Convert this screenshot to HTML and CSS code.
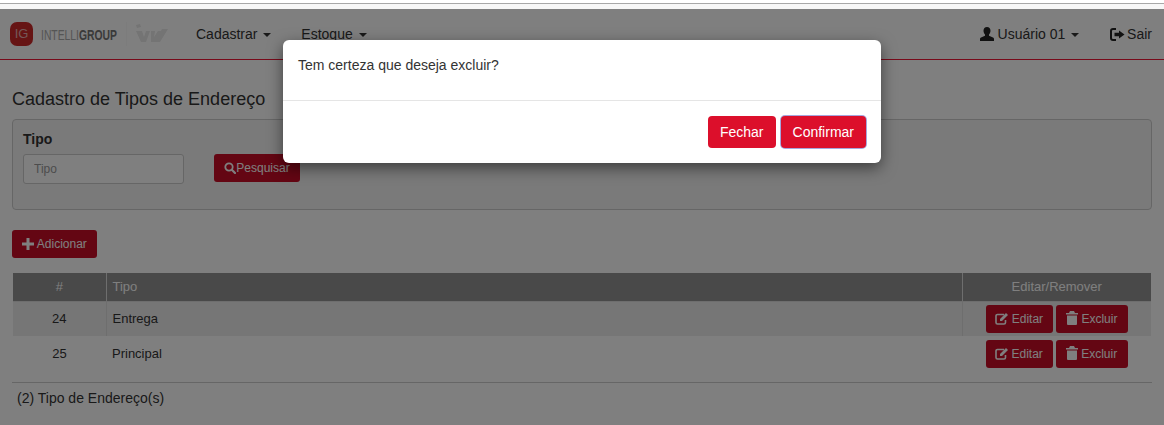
FILE: index.html
```html
<!DOCTYPE html>
<html>
<head>
    <meta charset="utf-8">
    <title>Cadastro de Tipos de Endereço</title>
    <link rel="stylesheet" href="styles.css">
</head>
<body>
    <div class="browser-strip"></div>
    <div class="page">
        <nav class="navbar">
            <div class="brand">
                <span class="brand-badge">IG</span>
                <span class="brand-name">INTELLI<b>GROUP</b></span>
                <svg class="brand-mark" width="43" height="24" viewBox="0 0 43 24">
                    <path d="M.5 0v24" stroke="#f8f8f8"/>
                    <path d="M10 3l4-1 1 3-4 1zM10 9h6l2 6 2-6h4l-4 11h-5zM25 9h4l-1 6 4-6h4l-7 11h-4zM36 7h6l-8 13h-5z" fill="#e8e8e8"/>
                </svg>
            </div>
            <a class="nav-link">Cadastrar <i class="caret"></i></a>
            <a class="nav-link">Estoque <i class="caret"></i></a>
            <div class="nav-right">
                <a class="nav-link user-link">
                    <svg class="icon" width="14" height="14" viewBox="0 0 14 14"><path d="M7 0c2.200 0 3.500 1.600 3.500 3.800 0 1.500-.6 2.900-1.500 3.700v1.200l4 1.800c.6.300 1 .8 1 1.500v2H0v-2c0-.7.400-1.200 1-1.500l4-1.800V7.500C4.100 6.700 3.500 5.300 3.500 3.800 3.500 1.600 4.800 0 7 0z" fill="#222"/></svg>
                    Usuário 01 <i class="caret"></i>
                </a>
                <a class="nav-link exit-link">
                    <svg class="icon icon-exit" width="15" height="13" viewBox="0 0 15 13"><path d="M6 1H3a2 2 0 0 0-2 2v7a2 2 0 0 0 2 2h3" fill="none" stroke="#222" stroke-width="2"/><path d="M9 2.500 14.500 6.500 9 10.500V8.200H4.500V4.800H9z" fill="#222"/></svg>
                    Sair
                </a>
            </div>
        </nav>

        <main class="content">
            <h1 class="title">Cadastro de Tipos de Endereço</h1>

            <section class="filter-panel">
                <div class="field">
                    <label class="field-label">Tipo</label>
                    <input class="field-input" placeholder="Tipo">
                </div>
                <button class="btn btn-search">
                    <svg class="icon" width="12" height="12" viewBox="0 0 12 12"><circle cx="5" cy="5" r="3.700" fill="none" stroke="#fff" stroke-width="1.800"/><path d="M7.800 7.800 11 11" stroke="#fff" stroke-width="2.200" stroke-linecap="round"/></svg>Pesquisar
                </button>
            </section>

            <button class="btn btn-add">
                <svg class="icon" width="12" height="12" viewBox="0 0 12 12"><path d="M4.500 0h3v4.500H12v3H7.500V12h-3V7.500H0v-3h4.500z" fill="#fff"/></svg>
                Adicionar
            </button>

            <table class="grid">
                <thead>
                    <tr>
                        <th class="col-id">#</th>
                        <th class="col-type">Tipo</th>
                        <th class="col-actions">Editar/Remover</th>
                    </tr>
                </thead>
                <tbody>
                    <tr class="odd">
                        <td class="col-id">24</td>
                        <td class="col-type">Entrega</td>
                        <td class="col-actions">
                            <div class="row-actions">
                                <button class="btn btn-row btn-edit">
                                    <svg class="icon" width="13" height="12" viewBox="0 0 13 12"><path d="M9 1.500H2.500A1.500 1.500 0 0 0 1 3v6.500A1.500 1.500 0 0 0 2.500 11H9a1.500 1.500 0 0 0 1.500-1.500V7" fill="none" stroke="#fff" stroke-width="1.600"/><path d="M11 0l2 2-6 6H5V6z" fill="#fff"/></svg>
                                    Editar
                                </button>
                                <button class="btn btn-row btn-delete">
                                    <svg class="icon" width="12" height="14" viewBox="0 0 12 14"><path d="M4 0h4l1 2h3v1.500H0V2h3zM1 4.500h10V13a1 1 0 0 1-1 1H2a1 1 0 0 1-1-1z" fill="#fff"/></svg>
                                    Excluir
                                </button>
                            </div>
                        </td>
                    </tr>
                    <tr>
                        <td class="col-id">25</td>
                        <td class="col-type">Principal</td>
                        <td class="col-actions">
                            <div class="row-actions">
                                <button class="btn btn-row btn-edit">
                                    <svg class="icon" width="13" height="12" viewBox="0 0 13 12"><path d="M9 1.500H2.500A1.500 1.500 0 0 0 1 3v6.500A1.500 1.500 0 0 0 2.500 11H9a1.500 1.500 0 0 0 1.500-1.500V7" fill="none" stroke="#fff" stroke-width="1.600"/><path d="M11 0l2 2-6 6H5V6z" fill="#fff"/></svg>
                                    Editar
                                </button>
                                <button class="btn btn-row btn-delete">
                                    <svg class="icon" width="12" height="14" viewBox="0 0 12 14"><path d="M4 0h4l1 2h3v1.500H0V2h3zM1 4.500h10V13a1 1 0 0 1-1 1H2a1 1 0 0 1-1-1z" fill="#fff"/></svg>
                                    Excluir
                                </button>
                            </div>
                        </td>
                    </tr>
                </tbody>
            </table>

            <hr class="divider">
            <p class="total">(2) Tipo de Endereço(s)</p>
        </main>

        <div class="backdrop"></div>
    </div>

    <div class="modal">
        <div class="modal-body">Tem certeza que deseja excluir?</div>
        <div class="modal-footer">
            <button class="btn btn-modal">Fechar</button>
            <button class="btn btn-modal btn-focus">Confirmar</button>
        </div>
    </div>
</body>
</html>
```

FILE: styles.css
```css
* {
    box-sizing: border-box;
}

html, body {
    height: 100%;
}

body {
    margin: 0;
    background-color: #fff;
    color: #333;
    font-family: "Liberation Sans", Arial, sans-serif;
    font-size: 14px;
    overflow: hidden;
}

.browser-strip {
    height: 9px;
    background-color: #f7f7f7;
    background-image: linear-gradient(#fff 3px, #a8a8a8 3px, #a8a8a8 4px, transparent 4px);
}

.page {
    position: relative;
    height: 416px;
    background-color: #fff;
}

.backdrop {
    position: absolute;
    top: 0;
    left: 0;
    right: 0;
    bottom: 0;
    background-color: #000;
    opacity: 0.5;
}

/* top bar */
.navbar {
    display: flex;
    align-items: center;
    height: 51px;
    padding: 0 12px 0 10px;
    border-bottom: 1px solid #f01434;
}

.brand {
    display: flex;
    align-items: center;
    width: 186px;
}

.brand-badge {
    width: 23px;
    height: 24px;
    border-radius: 7px;
    background-color: #cc2828;
    color: #e8b0b0;
    font-size: 13px;
    line-height: 24px;
    text-align: center;
}

.brand-name {
    width: 77px;
    margin-left: 8px;
    color: #aaa;
    font-size: 15px;
    white-space: nowrap;
    transform: scaleX(0.69);
    transform-origin: left center;
}

.brand-name b {
    color: #757575;
}

.brand-mark {
    margin-left: 8px;
}

.nav-link {
    margin-right: 30px;
    color: #333;
    font-size: 14px;
    white-space: nowrap;
}

.caret {
    display: inline-block;
    margin-left: 2px;
    vertical-align: middle;
    border-top: 4px solid #333;
    border-left: 4px solid transparent;
    border-right: 4px solid transparent;
}

.nav-right {
    display: flex;
    margin-left: auto;
}

.user-link {
    margin-right: 31px;
}

.exit-link {
    margin-right: 0;
}

.icon {
    vertical-align: -2px;
}

.icon-exit {
    margin-right: -2px;
}

/* page body */
.content {
    padding: 0 12px;
}

.title {
    margin: 29px 0 10px;
    color: #333;
    font-size: 18px;
    font-weight: 400;
    line-height: 20px;
}

.filter-panel {
    display: flex;
    align-items: flex-start;
    height: 91px;
    padding: 11px 10px;
    border: 1px solid #ccc;
    border-radius: 4px;
    background-color: #f5f5f5;
}

.field {
    display: flex;
    flex-direction: column;
    width: 161px;
}

.field-label {
    margin-bottom: 7px;
    color: #333;
    font-size: 14px;
    font-weight: 700;
    line-height: 16px;
}

.field-input {
    height: 30px;
    padding: 0 10px;
    border: 1px solid #ccc;
    border-radius: 3px;
    background-color: #fff;
    font-family: inherit;
    font-size: 12px;
}

.field-input::placeholder {
    color: #999;
}

.btn {
    border: 0;
    border-radius: 3px;
    background-color: #c80d26;
    color: #fff;
    font-family: inherit;
    cursor: pointer;
    white-space: nowrap;
}

.btn-search {
    width: 86px;
    height: 28px;
    margin: 23px 0 0 30px;
    padding: 0;
    font-size: 12px;
}

.btn-add {
    display: block;
    width: 85px;
    height: 28px;
    margin-top: 20px;
    padding: 0;
    font-size: 12px;
}

/* table */
.grid {
    width: 1138px;
    margin: 15px 0 0 1px;
    border-collapse: collapse;
    table-layout: fixed;
    color: #333;
    font-size: 13px;
}

.grid th {
    height: 28px;
    padding: 0 6px;
    background-color: #929292;
    color: #fff;
    font-weight: 400;
    text-align: left;
    border-right: 1px solid #ddd;
    border-bottom: 1px solid #ddd;
}

.grid th:last-child {
    border-right: 0;
}

.grid td {
    height: 35px;
    padding: 0 6px;
}

.odd td {
    background-color: #ececec;
}

.odd td:not(:last-child) {
    border-right: 1px solid #ddd;
}

.grid .col-id {
    width: 93px;
    text-align: center;
}

.grid .col-actions {
    width: 189px;
    text-align: center;
}

.row-actions {
    display: flex;
    justify-content: center;
    gap: 3px;
}

.btn-row {
    height: 28px;
    padding: 0;
    font-size: 12px;
}

.btn-edit {
    width: 67px;
}

.btn-delete {
    width: 72px;
}

.divider {
    margin: 11px 0 0;
    border: 0;
    border-top: 1px solid #ccc;
}

.total {
    margin: 7px 0 0 5px;
    font-size: 14px;
    line-height: 16px;
}

/* dialog */
.modal {
    position: absolute;
    top: 40px;
    left: 283px;
    width: 598px;
    height: 123px;
    border-radius: 6px;
    background-color: #fff;
    box-shadow: 0 5px 15px rgba(0, 0, 0, 0.5);
}

.modal-body {
    height: 61px;
    padding: 16px 15px;
    border-bottom: 1px solid #e5e5e5;
    font-size: 14px;
    line-height: 18px;
}

.modal-footer {
    display: flex;
    justify-content: flex-end;
    gap: 5px;
    padding: 15px;
}

.btn-modal {
    height: 32px;
    padding: 0 12px;
    border-radius: 4px;
    background-color: #dc0f2b;
    font-size: 14px;
}

.btn-focus {
    box-shadow: 0 0 0 1px #a6a6dc;
}
```
